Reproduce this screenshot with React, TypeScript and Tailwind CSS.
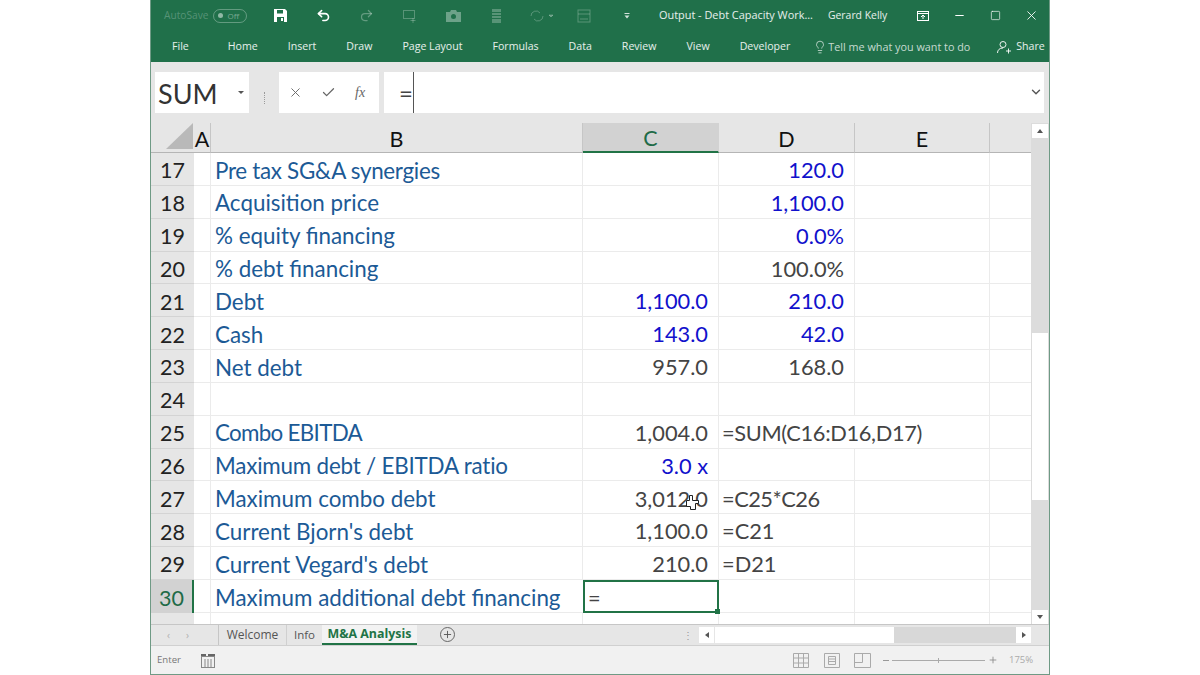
import { Undo2, Redo2, X, Check, ChevronDown, Minus, Square, Lightbulb, Plus } from "lucide-react";

const FONT = "font-['Lato','Liberation_Sans',sans-serif]";
const UI = "font-['Open_Sans','Liberation_Sans',sans-serif]";

type Row = {
  n: number;
  b?: string;
  bTrack?: string;
  c?: string;
  cBlue?: boolean;
  d?: string;
  dTrack?: string;
  dBlue?: boolean;
  dLeft?: boolean;
  spill?: boolean;
};

// tracking values make up for Lato being a bit off from the sheet's Calibri
const rows: Row[] = [
  { n: 17, b: "Pre tax SG&A synergies", bTrack: "tracking-[-0.3px]", d: "120.0", dBlue: true },
  { n: 18, b: "Acquisition price", d: "1,100.0", dBlue: true },
  { n: 19, b: "% equity financing", d: "0.0%", dBlue: true },
  { n: 20, b: "% debt financing", d: "100.0%" },
  { n: 21, b: "Debt", c: "1,100.0", cBlue: true, d: "210.0", dBlue: true },
  { n: 22, b: "Cash", c: "143.0", cBlue: true, d: "42.0", dBlue: true },
  { n: 23, b: "Net debt", c: "957.0", d: "168.0" },
  { n: 24 },
  { n: 25, b: "Combo EBITDA", bTrack: "tracking-[-0.7px]", c: "1,004.0", d: "=SUM(C16:D16,D17)", dTrack: "tracking-[-0.35px]", dLeft: true, spill: true },
  { n: 26, b: "Maximum debt / EBITDA ratio", bTrack: "tracking-[-0.2px]", c: "3.0 x", cBlue: true },
  { n: 27, b: "Maximum combo debt", c: "3,012.0", d: "=C25*C26", dTrack: "tracking-[-0.5px]", dLeft: true },
  { n: 28, b: "Current Bjorn's debt", c: "1,100.0", d: "=C21", dLeft: true },
  { n: 29, b: "Current Vegard's debt", c: "210.0", d: "=D21", dLeft: true },
];

const menu = ["Home", "Insert", "Draw", "Page Layout", "Formulas", "Data", "Review", "View", "Developer"];

const Cell = ({ className = "", children }: { className?: string; children?: React.ReactNode }) => (
  <div className={`border-b border-[#ebebeb] flex items-center pt-[3px] min-w-0 shrink-0 ${className}`}>{children}</div>
);

const ColHead = ({ label, active, w }: { label: string; active?: boolean; w: string }) => (
  <div
    className={`${w} shrink-0 h-full flex items-center justify-center border-r ${
      active
        ? "bg-[#d2d2d2] text-[#1f6b47] border-[#d2d2d2] border-b-2 border-b-[#217346]"
        : "border-[#c6c6c6] border-b border-b-[#b5b5b5] text-[#111]"
    }`}
  >
    <span className="text-[21.5px] mt-[3px]">{label}</span>
  </div>
);

function SheetRow({ row }: { row: Row }) {
  return (
    <div className="flex h-[32.85px] shrink-0">
      <div className="w-[43px] shrink-0 bg-[#e6e6e6] flex items-center justify-center pt-[3px] border-b border-[#d4d4d4] text-[21.5px] text-[#222]">
        {row.n}
      </div>
      <Cell className="w-[17px] border-r" />
      <Cell className={`w-[372px] border-r pl-[4px] text-[22.4px] text-[#1c5a96] ${row.bTrack ?? ""}`}>{row.b}</Cell>
      <Cell className={`w-[136px] border-r justify-end pr-[10px] text-[21.8px] ${row.cBlue ? "text-[#1111cc]" : "text-[#444]"}`}>
        {row.c}
      </Cell>
      <Cell
        className={`w-[136px] text-[21.8px] whitespace-nowrap ${row.spill ? "" : "border-r"} ${row.dTrack ?? ""} ${
          row.dLeft ? "pl-[3px] text-[#444]" : row.dBlue ? "justify-end pr-[10px] text-[#1111cc]" : "justify-end pr-[10px] text-[#444]"
        }`}
      >
        {row.d}
      </Cell>
      <Cell className="w-[135px] border-r" />
      <Cell className="w-[41px]" />
    </div>
  );
}

export default function App() {
  return (
    <div className="w-[1200px] h-[675px] bg-white flex justify-center overflow-hidden">
      <div className={`w-[900px] h-[675px] flex flex-col bg-[#e6e6e6] border-x border-b border-[#6f9a85] ${FONT}`}>
        {/* title bar + tabs */}
        <div className={`h-[62px] shrink-0 bg-[#20704a] text-white ${UI}`}>
          <div className="h-[31px] flex items-center">
            <span className="ml-[13px] text-[10.2px] text-white/25">AutoSave</span>
            <div className="ml-[4px] w-[34px] h-[14px] rounded-full border border-white/30 flex items-center pl-[4px] gap-[5px]">
              <div className="w-[5px] h-[5px] rounded-full bg-white/50" />
              <span className="text-[8px] text-white/40">Off</span>
            </div>
            <div className="ml-[12px] flex items-center">
              <div className="w-[43.4px] flex justify-center">
                <svg width="13" height="13" viewBox="0 0 13 13" fill="#fff">
                  <path d="M0 0h11l2 2v11H0z" />
                  <path d="M3 1h6v3.500H3zM3 8h7v5H3z" fill="#20704a" />
                  <path d="M7 9h2v3H7z" />
                </svg>
              </div>
              <div className="w-[43.4px] flex justify-center">
                <Undo2 size={15} strokeWidth={2.6} />
              </div>
              <div className="w-[43.4px] flex justify-center text-white/30">
                <Redo2 size={15} strokeWidth={2} />
              </div>
              <div className="w-[43.4px] flex justify-center text-white/25">
                <svg width="16" height="16" viewBox="0 0 16 16" fill="none" stroke="currentColor">
                  <rect x="1.500" y="2.500" width="11" height="8" />
                  <path d="M11 10v5M8.500 12.500h5" />
                </svg>
              </div>
              <div className="w-[43.4px] flex justify-center text-white/35">
                <svg width="15" height="13" viewBox="0 0 15 13" fill="currentColor">
                  <path d="M0 3h4l1-2h5l1 2h4v10H0z" />
                  <circle cx="7.500" cy="7.500" r="2.500" fill="#20704a" />
                </svg>
              </div>
              <div className="w-[43.4px] flex justify-center text-white/25">
                <svg width="12" height="16" viewBox="0 0 12 16" fill="currentColor">
                  <path d="M1 1h9v3H1zM1 5h9v2H1zM1 8h9v2H1zM1 11h9v4H1z" />
                </svg>
              </div>
              <div className="w-[43.4px] flex justify-center text-white/25">
                <svg width="26" height="16" viewBox="0 0 26 16" fill="none" stroke="currentColor">
                  <path d="M3 8a5 5 0 0 1 9-3M15 8a5 5 0 0 1-9 3" />
                  <path d="M21 7h4l-2 2z" fill="currentColor" />
                </svg>
              </div>
              <div className="w-[43.4px] flex justify-center text-white/25">
                <svg width="16" height="16" viewBox="0 0 16 16" fill="none" stroke="currentColor">
                  <rect x="2" y="2" width="12" height="12" />
                  <path d="M2 6h12M4 11h8" />
                </svg>
              </div>
              <div className="w-[43.4px] flex justify-center text-white/80">
                <svg width="6" height="8" viewBox="0 0 6 8" fill="currentColor">
                  <rect x="0.500" y="1" width="5" height="1" />
                  <path d="M0.500 3.500h5L3 6.500z" />
                </svg>
              </div>
            </div>
            <span className="ml-[10px] text-[10.9px] text-white/90 whitespace-nowrap">Output - Debt Capacity Work...</span>
            <span className="ml-[15px] text-[10.4px] text-white/90 whitespace-nowrap">Gerard Kelly</span>
            <div className="ml-auto flex items-center">
              <div className="w-[36px] flex justify-center">
                <svg width="14" height="12" viewBox="0 0 14 12" fill="none" stroke="currentColor">
                  <rect x="1.500" y="1.500" width="11" height="9" />
                  <path d="M1.500 3.500h11M7 9V5M5 7l2-2 2 2" />
                </svg>
              </div>
              <div className="w-[36px] flex justify-center">
                <Minus size={13} />
              </div>
              <div className="w-[36px] flex justify-center">
                <Square size={11} strokeWidth={1.4} />
              </div>
              <div className="w-[36px] flex justify-center">
                <X size={15} strokeWidth={1.4} />
              </div>
            </div>
          </div>
          <div className="h-[31px] flex items-center text-[10.6px] text-white/90">
            <span className="ml-[21px] mr-[39px]">File</span>
            <div className="flex gap-[30px]">
              {menu.map((m) => (
                <span key={m} className="whitespace-nowrap">
                  {m}
                </span>
              ))}
            </div>
            <Lightbulb size={14} strokeWidth={1.2} className="ml-[23px]" />
            <span className="ml-[1px] mt-[1px] text-[10.8px] text-white/75 whitespace-nowrap">Tell me what you want to do</span>
            <svg width="16" height="14" viewBox="0 0 16 14" className="ml-[26px]" fill="none" stroke="currentColor">
              <circle cx="7" cy="4.500" r="3" />
              <path d="M1.500 13c0-3 2-5 5.500-5M10 11h5M12.500 8.500v5" />
            </svg>
            <span className="ml-[4px] mt-[1px] text-[10.6px]">Share</span>
          </div>
        </div>

        {/* formula bar */}
        <div className="h-[61px] shrink-0 flex pt-[10px] pl-[4px] pr-[5px]">
          <div className="w-[94px] h-[41px] bg-white flex items-center pl-[3px] pt-[3px] relative shrink-0">
            <span className="text-[27px] text-[#333]">SUM</span>
            <div className="absolute right-[5px] top-[19px] w-0 h-0 border-x-[3px] border-x-transparent border-t-[3px] border-t-[#555]" />
          </div>
          <div className="w-[30px] flex items-center justify-center shrink-0">
            <div className="h-[12px] border-l border-dotted border-[#9a9a9a]" />
          </div>
          <div className="w-[100px] h-[41px] bg-white flex items-center text-[#666] shrink-0">
            <X size={15} strokeWidth={1.5} className="ml-[9px]" />
            <Check size={15} strokeWidth={2} className="ml-[18px]" />
            <span className="ml-[19px] font-['Liberation_Serif',serif] italic text-[14px]">fx</span>
          </div>
          <div className="flex-1 ml-[5px] h-[41px] bg-white flex items-center pl-[15px] relative">
            <span className="text-[24px] text-[#444] leading-none">=</span>
            <div className="w-px h-[41px] bg-[#555]" />
            <ChevronDown size={14} strokeWidth={2.4} className="absolute right-[1px] top-[13px] text-[#555]" />
          </div>
        </div>

        {/* grid + scrollbar */}
        <div className="flex-1 min-h-0 flex">
          <div className={`w-[880px] flex flex-col overflow-hidden relative bg-white ${FONT}`}>
            <div className="flex h-[30px] shrink-0 bg-[#e6e6e6]">
              <div className="w-[43px] h-full border-b border-[#b5b5b5] flex items-end justify-end pr-[1px] pb-[3px] shrink-0">
                <div className="w-0 h-0 border-l-[27px] border-l-transparent border-b-[26px] border-b-[#b9b9b9]" />
              </div>
              <ColHead label="A" w="w-[17px]" />
              <ColHead label="B" w="w-[372px]" />
              <ColHead label="C" w="w-[136px]" active />
              <ColHead label="D" w="w-[136px]" />
              <ColHead label="E" w="w-[135px]" />
              <div className="w-[41px] border-b border-[#b5b5b5]" />
            </div>

            {rows.map((r) => (
              <SheetRow key={r.n} row={r} />
            ))}

            {/* active row 30 */}
            <div className="flex h-[32.85px] shrink-0">
              <div className="w-[43px] shrink-0 bg-[#d2d2d2] flex items-center justify-center pt-[3px] border-r-2 border-[#217346] text-[21.5px] text-[#1f6b47]">
                30
              </div>
              <Cell className="w-[17px] border-r" />
              <Cell className="w-[372px] pl-[4px] text-[22.4px] text-[#1c5a96] whitespace-nowrap">
                Maximum additional debt financing
              </Cell>
              <div className="w-[136px] shrink-0 h-[33px] border-2 border-[#217346] flex items-center pl-[3px] pt-[3px] text-[21.8px] text-[#444] relative">
                =
                <div className="absolute -right-[3px] -bottom-[3px] w-[5px] h-[5px] bg-[#217346]" />
              </div>
              <Cell className="w-[136px] border-r" />
              <Cell className="w-[135px] border-r" />
              <Cell className="w-[41px]" />
            </div>

            {/* row 31, clipped by the tab strip */}
            <div className="flex h-[32.85px] shrink-0">
              <div className="w-[43px] shrink-0 bg-[#e6e6e6] flex items-center justify-center pt-[3px] text-[21.5px] text-[#222]">31</div>
              <Cell className="w-[17px] border-r" />
              <Cell className="w-[372px] border-r" />
              <Cell className="w-[136px] border-r" />
              <Cell className="w-[136px] border-r" />
              <Cell className="w-[135px] border-r" />
            </div>

            {/* cursor over C27 */}
            <svg width="16" height="18" viewBox="0 0 16 18" className="absolute left-[533px] top-[371px]" fill="#fff" stroke="#222">
              <path d="M5.500 1.500h3v5h6v3h-3v6h-5v-3h-4v-6h3z" />
            </svg>
          </div>
          <div className="w-[18px] flex flex-col bg-[#dcdcdc]">
            <div className="h-[14px] mt-[1px] mx-[1px] bg-white flex items-center justify-center shrink-0">
              <div className="w-0 h-0 border-x-[3.5px] border-x-transparent border-b-[4px] border-b-[#555]" />
            </div>
            <div className="h-[195px] shrink-0" />
            <div className="h-[167px] bg-white mx-[1px] shrink-0" />
            <div className="flex-1" />
            <div className="h-[14px] mx-[1px] bg-white flex items-center justify-center shrink-0">
              <div className="w-0 h-0 border-x-[3.5px] border-x-transparent border-t-[4px] border-t-[#555]" />
            </div>
          </div>
        </div>

        {/* sheet tabs */}
        <div className={`h-[21px] shrink-0 flex items-stretch bg-[#e6e6e6] border-t border-[#c6c6c6] ${UI} text-[12px]`}>
          <div className="w-[68px] flex items-center pl-[16px] text-[#b0b0b0] border-r border-[#c6c6c6] text-[10px]">
            <span className="w-[19px]">‹</span>
            <span>›</span>
          </div>
          <div className="w-[68px] flex items-center justify-center text-[#555] border-r border-[#d0d0d0]">Welcome</div>
          <div className="w-[35px] flex items-center justify-center text-[#555] text-[11.5px]">Info</div>
          <div className="w-[95px] bg-[#f3f3f3] border-b-2 border-[#217346] flex items-center justify-center font-bold text-[#217346] whitespace-nowrap text-[12.4px]">
            M&amp;A Analysis
          </div>
          <div className="ml-[23px] mt-[2px] w-[15px] h-[15px] rounded-full border border-[#666] flex items-center justify-center">
            <Plus size={11} className="text-[#555]" />
          </div>
          <div className="w-[238px] flex items-center justify-end text-[#999] text-[10px]">⋮</div>
          <div className="ml-[6px] mt-[2px] h-[16px] w-[15px] bg-white flex items-center justify-center">
            <div className="w-0 h-0 border-y-[3.5px] border-y-transparent border-r-[4px] border-r-[#555]" />
          </div>
          <div className="ml-px mt-[2px] h-[16px] w-[179px] bg-white" />
          <div className="mt-[2px] h-[16px] w-[122px] bg-[#d8d8d8]" />
          <div className="mt-[2px] h-[16px] w-[15px] bg-white flex items-center justify-center">
            <div className="w-0 h-0 border-y-[3.5px] border-y-transparent border-l-[4px] border-l-[#555]" />
          </div>
        </div>

        {/* status bar */}
        <div className={`h-[29px] shrink-0 flex items-center bg-[#f1f1f1] border-t border-[#d0d0d0] text-[#777] ${UI}`}>
          <span className="ml-[6px] text-[9.6px]">Enter</span>
          <svg width="16" height="15" viewBox="0 0 16 15" className="ml-[19px]" fill="none" stroke="#888">
            <rect x="1.500" y="3.500" width="13" height="11" />
            <path d="M1 2h5M8 2h7" stroke="#666" strokeWidth="2" />
            <path d="M5 6v8M8 6v8M11 6v8" />
          </svg>
          <svg width="16" height="15" viewBox="0 0 16 15" className="ml-[577px]" fill="none" stroke="#aaa">
            <path d="M.5.500h15v14H.5zM.5 5h15M.5 10h15M5.500.500v14M10.500.500v14" />
          </svg>
          <svg width="16" height="15" viewBox="0 0 16 15" className="ml-[15px]" fill="none" stroke="#aaa">
            <path d="M.5.500h15v14H.5zM4.500 3.500h7v8h-7zM4.500 6h7M4.500 8.500h7" />
          </svg>
          <svg width="17" height="15" viewBox="0 0 17 15" className="ml-[14px]" fill="none" stroke="#aaa">
            <path d="M.5.500h16v14H.5zM.5 9.500h8M8.500.500v9" />
          </svg>
          <div className="ml-[12px] w-[6px] h-px bg-[#999]" />
          <div className="ml-[3px] w-[93px] h-px bg-[#aaa] relative">
            <div className="absolute left-[46px] -top-[2px] w-px h-[5px] bg-[#aaa]" />
          </div>
          <Plus size={10} strokeWidth={2} className="ml-[3px] text-[#888]" />
          <span className="ml-[11px] text-[9.5px] text-[#aaa]">175%</span>
        </div>
      </div>
    </div>
  );
}
